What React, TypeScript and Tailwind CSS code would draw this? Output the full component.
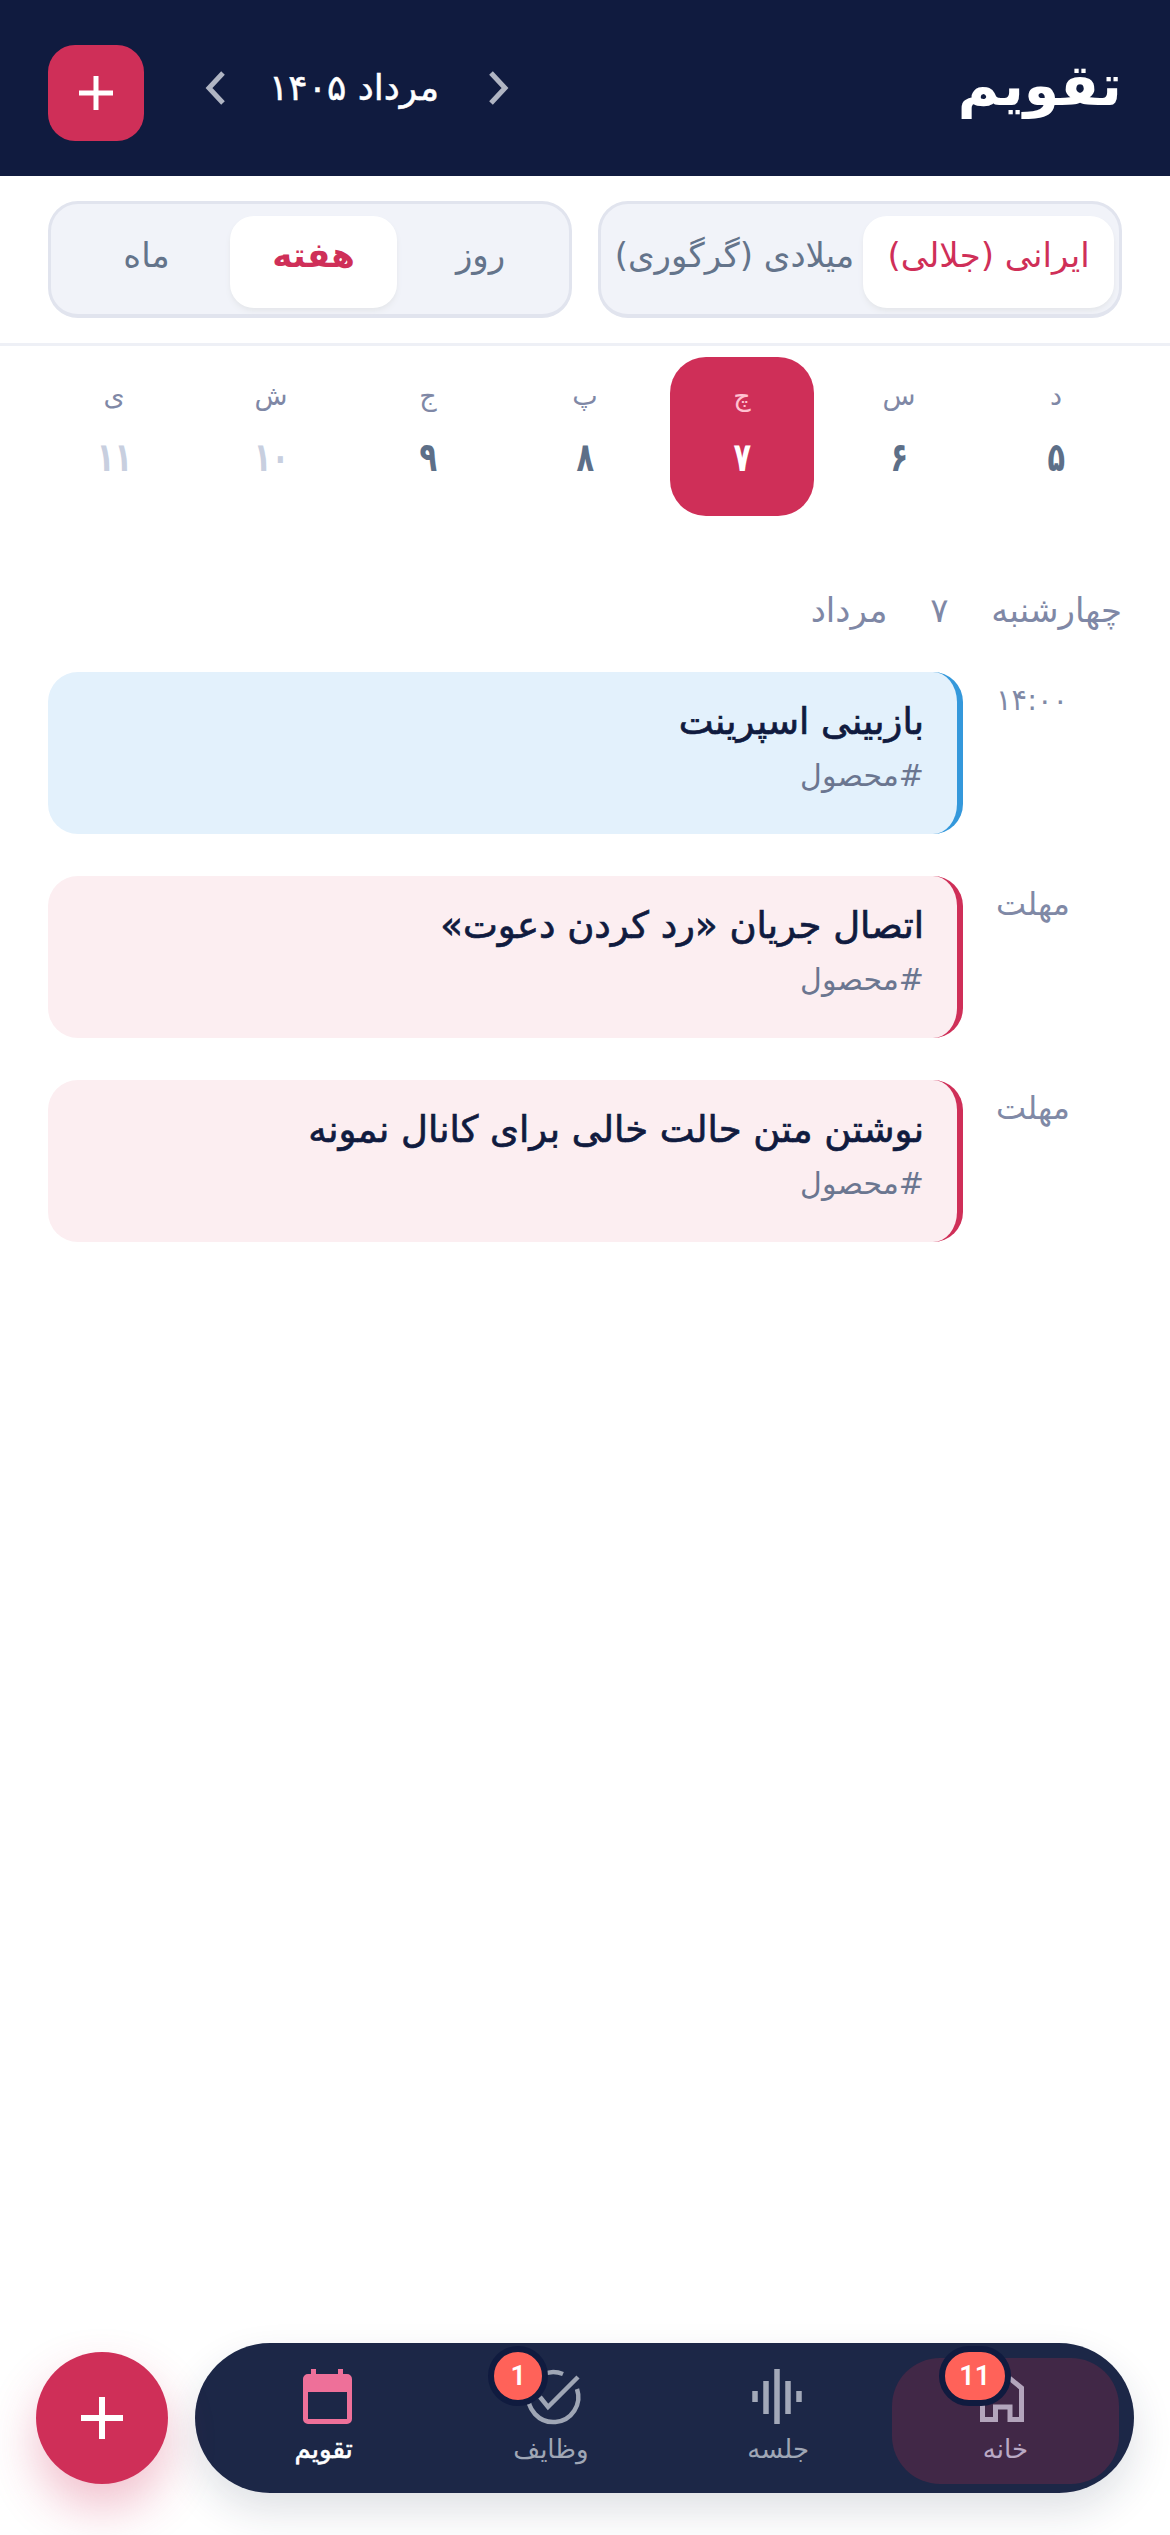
const fontStack = { fontFamily: '"DejaVu Sans", "Noto Sans", sans-serif' }

const days = [
  { name: 'د', num: '۵' },
  { name: 'س', num: '۶' },
  { name: 'چ', num: '۷', active: true },
  { name: 'پ', num: '۸' },
  { name: 'ج', num: '۹' },
  { name: 'ش', num: '۱۰', muted: true },
  { name: 'ی', num: '۱۱', muted: true },
]

const events = [
  { time: '۱۴:۰۰', size: 'text-[29px]', title: 'بازبینی اسپرینت', blue: true },
  { time: 'مهلت', size: 'text-[32px]', title: 'اتصال جریان «رد کردن دعوت»' },
  { time: 'مهلت', size: 'text-[32px]', title: 'نوشتن متن حالت خالی برای کانال نمونه' },
]

const PlusIcon = ({ size, stroke }: { size: number; stroke: number }) => (
  <svg width={size} height={size} viewBox={`0 0 ${size} ${size}`} stroke="white" strokeWidth={stroke}>
    <path d={`M0 ${size / 2}H${size}M${size / 2} 0V${size}`} />
  </svg>
)

const Chevron = ({ left }: { left?: boolean }) => (
  <svg width="22" height="34" viewBox="0 0 22 34" fill="none" stroke="#b0b5c3" strokeWidth="5">
    <path d={left ? 'M19 2L5 17L19 32' : 'M3 2L17 17L3 32'} />
  </svg>
)

const CalendarIcon = () => (
  <svg width="60" height="57" viewBox="0 0 60 57" fill="#ee7099" className="overflow-visible">
    <path
      fillRule="evenodd"
      d="M17 1H22V6H44V1H49V6H53A5 5 0 0 1 58 11V51A5 5 0 0 1 53 56H14A5 5 0 0 1 9 51V11A5 5 0 0 1 14 6H17ZM14 24V51H53V24Z"
    />
  </svg>
)

const TasksIcon = () => (
  <svg width="60" height="57" viewBox="0 0 60 57" fill="none" stroke="#9fa6b5" strokeWidth="4.5" className="overflow-visible">
    <path d="M56 21A25 25 0 1 1 42 6" />
    <path d="M19 29L27 39L57 9" />
  </svg>
)

const WaveIcon = () => (
  <svg width="60" height="57" viewBox="0 0 60 57" fill="none" stroke="#a3a9b9" strokeWidth="5.5">
    <path d="M7 23V34M18 13V46M29 1V56M40 13V46M51 23V34" />
  </svg>
)

const HomeIcon = () => (
  <svg width="60" height="57" viewBox="0 0 60 57" fill="none" stroke="#b3a5bc" strokeWidth="5">
    <path d="M7.5 51.5V20L27 4L46.5 20V51.5H35V39H20.5V51.5Z" />
  </svg>
)

const Segment = ({ items, active, widths }: { items: string[]; active: number; widths: string[] }) => (
  <div className="flex h-[117px] w-[524px] items-stretch rounded-[30px] border-[3px] border-b-[4px] border-[#e1e4ee] bg-[#f1f3f9] px-[5px] pb-[6px] pt-[12px]">
    {items.map((item, i) => (
      <div
        key={item}
        className={`flex items-center justify-center rounded-[24px] pb-[14px] text-[34px] ${widths[i]} ${i === active ? 'bg-white text-[#cf2f58] shadow-md shadow-gray-200' : 'text-[#64748b]'}`}
      >
        {item}
      </div>
    ))}
  </div>
)

const NavItem = ({ label, icon, badge, badgeClass, selected, labelClass }: {
  label: string
  icon: React.ReactNode
  badge?: string
  badgeClass?: string
  selected?: boolean
  labelClass: string
}) => (
  <div className={`relative flex flex-1 flex-col items-center rounded-[48px] pt-[10px] ${selected ? 'bg-[#412847]' : ''}`}>
    {icon}
    <span className={`mt-[7px] text-[26px] leading-[34px] ${labelClass}`}>{label}</span>
    {badge && (
      <span
        className={`absolute -top-[12px] flex h-[60px] items-center justify-center rounded-full border-[6px] border-[#101b3f] bg-[#ff6259] text-[27px] font-semibold text-white ${badgeClass}`}
        style={{ fontFamily: 'Roboto, sans-serif' }}
      >
        {badge}
      </span>
    )}
  </div>
)

export default function App() {
  return (
    <div dir="rtl" style={fontStack} className="flex h-[2535px] w-[1170px] flex-col overflow-hidden bg-white">
      <header className="flex h-[176px] shrink-0 items-center justify-between bg-[#101b3f] px-[48px]">
        <h1 className="-mt-[4px] text-[57px] font-bold text-white">تقویم</h1>
        <div className="flex items-center gap-[60px]">
          <div className="flex items-center gap-[46px]">
            <Chevron />
            <span className="-ml-[3px] mr-[3px] text-[36px] text-white [-webkit-text-stroke:0.5px_white]">مرداد ۱۴۰۵</span>
            <Chevron left />
          </div>
          <button className="mt-[10px] flex h-[96px] w-[96px] items-center justify-center rounded-[27px] bg-[#cf2f58]">
            <PlusIcon size={34} stroke={5} />
          </button>
        </div>
      </header>

      <div className="flex shrink-0 justify-between border-b-[3px] border-[#eef0f6] px-[48px] pb-[25px] pt-[25px]">
        <Segment items={['ایرانی (جلالی)', 'میلادی (گرگوری)']} active={0} widths={['w-[251px]', 'flex-1']} />
        <Segment items={['روز', 'هفته', 'ماه']} active={1} widths={['w-[167px]', 'w-[167px] font-bold', 'w-[167px]']} />
      </div>

      <main className="flex-1 px-[42px] pt-[11px]">
        <div className="flex gap-[13px]">
          {days.map(d => (
            <div
              key={d.num}
              className={`flex h-[159px] w-[144px] flex-col items-center rounded-[36px] pt-[15px] ${d.active ? 'bg-[#cf2f58]' : ''}`}
            >
              <span className={`text-[27px] leading-[48px] ${d.active ? 'text-[#ffc1d0]' : 'text-[#7f88a6]'}`}>{d.name}</span>
              <span className={`mt-[12px] scale-x-[0.72] text-[40px] font-bold leading-[50px] ${d.active ? 'text-white' : d.muted ? 'text-[#c8cfdf]' : 'text-[#5d6f88]'}`}>{d.num}</span>
            </div>
          ))}
        </div>

        <div className="mx-[6px] mt-[70px] text-[34px] leading-[48px] text-[#7f88a6] [word-spacing:32px]">چهارشنبه ۷ مرداد</div>

        <div className="mx-[6px] mt-[38px] flex flex-col gap-[42px]">
          {events.map(e => (
            <div key={e.title} className="flex gap-[33px]">
              <div className={`w-[126px] pt-[6px] text-left leading-[44px] text-[#8089a6] ${e.size}`}>{e.time}</div>
              <div className={`flex h-[162px] flex-1 flex-col rounded-[30px] border-r-[6px] pr-[33px] pt-[24px] ${e.blue ? 'border-[#3498db] bg-[#e3f1fc]' : 'border-[#cf2f58] bg-[#fceef1]'}`}>
                <div className="text-[37px] leading-[52px] text-[#101b3f] [-webkit-text-stroke:0.7px_#101b3f]">{e.title}</div>
                <div className="mt-[4px] text-[30px] leading-[48px] text-[#6b7690]">#محصول</div>
              </div>
            </div>
          ))}
        </div>
      </main>

      <footer className="flex shrink-0 items-center gap-[27px] px-[36px] pb-[42px]">
        <nav className="flex h-[150px] flex-1 items-stretch rounded-full bg-[#1c2747] px-[15px] pb-[9px] pt-[15px] shadow-[0_18px_40px_rgba(28,39,71,0.14)]">
          <NavItem label="خانه" icon={<HomeIcon />} badge="11" badgeClass="left-[47px] w-[72px]" selected labelClass="text-[#b9a9c4]" />
          <NavItem label="جلسه" icon={<WaveIcon />} labelClass="text-[#9fa6b5]" />
          <NavItem label="وظایف" icon={<TasksIcon />} badge="1" badgeClass="left-[51px] w-[60px]" labelClass="text-[#9fa6b5]" />
          <NavItem label="تقویم" icon={<CalendarIcon />} labelClass="text-white [-webkit-text-stroke:0.6px_white]" />
        </nav>
        <button className="flex h-[132px] w-[132px] items-center justify-center rounded-full bg-[#cf2f58] shadow-[0_24px_48px_rgba(207,47,88,0.3)]">
          <PlusIcon size={42} stroke={6} />
        </button>
      </footer>
    </div>
  )
}
